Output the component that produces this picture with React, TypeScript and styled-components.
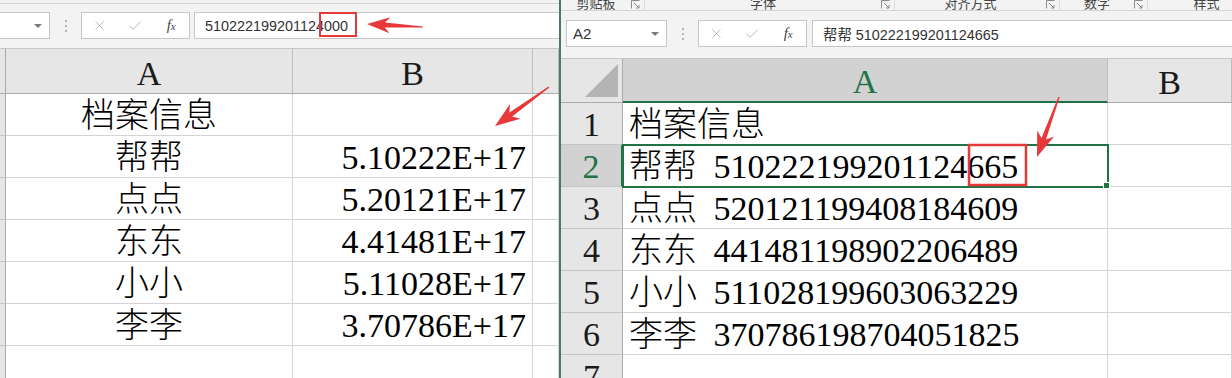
import React from 'react';
import styled, { createGlobalStyle, css } from 'styled-components';
import { X, Check } from 'lucide-react';

const GREEN = '#217346';
const RED = '#e8393a';
const CELL_FONT = `"Liberation Serif", "Noto Sans CJK SC", serif`;
const UI_FONT = `"Liberation Sans", "Noto Sans CJK SC", sans-serif`;

const GlobalStyle = createGlobalStyle`
  html, body { margin: 0; padding: 0; background: #fff; }
  body { width: 1232px; height: 378px; overflow: hidden; font-family: ${UI_FONT}; }
  #root { width: 1232px; height: 378px; }
`;

const Page = styled.div`
  position: relative;
  display: flex;
  width: 1232px;
  height: 378px;
  overflow: hidden;
`;

const Window = styled.div<{ $width?: number; $active?: boolean }>`
  display: flex;
  flex-direction: column;
  flex: ${p => (p.$width ? `0 0 ${p.$width}px` : '1 1 0')};
  min-width: 0;
  overflow: hidden;
  background: #f3f3f3;
  ${p => p.$active && css`border-left: 2px solid #4e7a5c;`}
`;

const Ribbon = styled.div<{ $height: number }>`
  flex: none;
  display: flex;
  height: ${p => p.$height}px;
  overflow: hidden;
  border-bottom: 1px solid #d5d5d5;
  background: #f3f3f3;
`;

const RibbonGroup = styled.div<{ $width: number }>`
  flex: 0 0 ${p => p.$width}px;
  display: flex;
  align-items: flex-end;
  padding-right: 4px;
  box-sizing: border-box;
  border-right: 1px solid #dcdcdc;
`;

const GroupLabel = styled.span`
  flex: 1;
  text-align: center;
  font: 13px/14px "Noto Sans CJK SC", sans-serif;
  color: #444;
  white-space: nowrap;
`;

const LauncherIcon = styled.svg`
  flex: none;
  margin-bottom: 1px;
`;

const Launcher = () => (
  <LauncherIcon viewBox="0 0 9 9" width={9} height={9}>
    <path d="M0.5 8.5V0.5H8.5" fill="none" stroke="#8a8a8a" />
    <path d="M3 3L8 8M8 5V8H5" fill="none" stroke="#8a8a8a" />
  </LauncherIcon>
);

const FormulaBar = styled.div<{ $height: number; $padTop: number; $padLeft: number }>`
  flex: none;
  display: flex;
  align-items: flex-start;
  height: ${p => p.$height}px;
  padding: ${p => p.$padTop}px 0 0 ${p => p.$padLeft}px;
  box-sizing: border-box;
  background: #f3f3f3;
`;

const NameBox = styled.div<{ $cut?: boolean }>`
  flex: none;
  width: 101px;
  height: 27px;
  box-sizing: border-box;
  margin-left: ${p => (p.$cut ? '-51px' : '0')};
  border: 1px solid #c6c6c6;
  background: #fff;
  display: flex;
  align-items: center;
  padding-left: 6px;
  font: 15px ${UI_FONT};
  color: #333;
`;

const DropArrow = styled.span`
  margin-left: auto;
  margin-right: 7px;
  width: 0;
  height: 0;
  border-left: 4px solid transparent;
  border-right: 4px solid transparent;
  border-top: 4px solid #7a7a7a;
`;

const Grip = styled.div`
  flex: 0 0 31px;
  height: 27px;
  display: flex;
  flex-direction: column;
  align-items: center;
  justify-content: center;
  gap: 3px;
  & > i {
    display: block;
    width: 2px;
    height: 2px;
    background: #b3b3b3;
  }
`;

const FxBox = styled.div`
  flex: 0 0 109px;
  height: 27px;
  box-sizing: border-box;
  border: 1px solid #c6c6c6;
  background: #fff;
  display: grid;
  grid-template-columns: repeat(3, 1fr);
  align-items: center;
  justify-items: center;
  color: #b0b0b0;
`;

const Fx = styled.span`
  font: italic 15px "Liberation Serif", serif;
  color: #444;
  & > small {
    font-size: 11px;
  }
`;

const FormulaInput = styled.div<{ $gap: number }>`
  flex: 1 1 0;
  min-width: 0;
  height: 27px;
  box-sizing: border-box;
  margin-left: ${p => p.$gap}px;
  border: 1px solid #c6c6c6;
  border-right: none;
  background: #fff;
  display: flex;
  align-items: center;
  padding-left: 10px;
  font: 14.4px ${UI_FONT};
  color: #333;
  white-space: nowrap;
`;

const Sheet = styled.div<{ $cols: string; $head: number }>`
  flex: 1 1 0;
  min-height: 0;
  overflow: hidden;
  display: grid;
  grid-template-columns: ${p => p.$cols};
  grid-template-rows: ${p => p.$head}px;
  grid-auto-rows: 42px;
  border-top: 1px solid #c6c6c6;
  background: #fff;
  font-family: ${CELL_FONT};
  font-size: 34px;
  font-weight: 300;
  color: #000;
`;

const baseCell = css`
  display: flex;
  align-items: flex-end;
  box-sizing: border-box;
  min-width: 0;
  white-space: nowrap;
  line-height: 34px;
  padding-bottom: 2px;
`;

const HeadCell = styled.div<{ $sel?: boolean }>`
  ${baseCell};
  justify-content: center;
  background: ${p => (p.$sel ? '#d2d2d2' : '#e6e6e6')};
  color: ${p => (p.$sel ? GREEN : '#1a1a1a')};
  border-right: 1px solid #bdbdbd;
  border-bottom: ${p => (p.$sel ? `2px solid ${GREEN}` : '1px solid #ababab')};
  overflow: hidden;
`;

const Corner = styled.div<{ $tri?: boolean }>`
  position: relative;
  background: #e6e6e6;
  box-sizing: border-box;
  border-right: 1px solid #ababab;
  border-bottom: 1px solid #ababab;
  ${p =>
    p.$tri &&
    css`
      &::after {
        content: '';
        position: absolute;
        right: 4px;
        bottom: 5px;
        width: 33px;
        height: 33px;
        background: #b4b4b4;
        clip-path: polygon(100% 0, 100% 100%, 0 100%);
      }
    `}
`;

const RowHead = styled.div<{ $sel?: boolean }>`
  ${baseCell};
  justify-content: center;
  background: ${p => (p.$sel ? '#d2d2d2' : '#e6e6e6')};
  color: ${p => (p.$sel ? GREEN : '#1a1a1a')};
  border-bottom: 1px solid #c4c4c4;
  border-right: ${p => (p.$sel ? `2px solid ${GREEN}` : '1px solid #ababab')};
  overflow: hidden;
`;

type Align = 'left' | 'center' | 'right';

const Cell = styled.div<{ $align?: Align; $active?: boolean }>`
  ${baseCell};
  justify-content: ${p =>
    p.$align === 'center' ? 'center' : p.$align === 'right' ? 'flex-end' : 'flex-start'};
  padding-left: 6px;
  padding-right: 6px;
  border-right: 1px solid #d4d4d4;
  border-bottom: 1px solid #d4d4d4;
  word-spacing: 8px;
  ${p =>
    p.$active &&
    css`
      position: relative;
      z-index: 1;
      outline: 2px solid ${GREEN};
      outline-offset: -1px;
      &::after {
        content: '';
        position: absolute;
        right: -3px;
        bottom: -3px;
        width: 5px;
        height: 5px;
        background: ${GREEN};
        border: 1px solid #fff;
      }
    `}
`;

const Overlay = styled.svg`
  position: absolute;
  left: 0;
  top: 0;
  width: 1232px;
  height: 378px;
  pointer-events: none;
  z-index: 5;
`;

type Pt = [number, number];

function arrowPoints(tail: Pt, tip: Pt, L = 22, H = 8, w0 = 0.6, w1 = 2.4): string {
  const dx = tip[0] - tail[0];
  const dy = tip[1] - tail[1];
  const len = Math.hypot(dx, dy);
  const ux = dx / len;
  const uy = dy / len;
  const nx = -uy;
  const ny = ux;
  const jx = tip[0] - ux * L * 0.78;
  const jy = tip[1] - uy * L * 0.78;
  const cx = tip[0] - ux * L;
  const cy = tip[1] - uy * L;
  const pts: Pt[] = [
    [tail[0] + nx * w0, tail[1] + ny * w0],
    [jx + nx * w1, jy + ny * w1],
    [cx + nx * H, cy + ny * H],
    tip,
    [cx - nx * H, cy - ny * H],
    [jx - nx * w1, jy - ny * w1],
    [tail[0] - nx * w0, tail[1] - ny * w0],
  ];
  return pts.map(p => `${p[0].toFixed(1)},${p[1].toFixed(1)}`).join(' ');
}

const leftRows: [string, string][] = [
  ['档案信息', ''],
  ['帮帮', '5.10222E+17'],
  ['点点', '5.20121E+17'],
  ['东东', '4.41481E+17'],
  ['小小', '5.11028E+17'],
  ['李李', '3.70786E+17'],
  ['', ''],
];

const rightRows: string[] = [
  '档案信息',
  '帮帮 510222199201124665',
  '点点 520121199408184609',
  '东东 441481198902206489',
  '小小 511028199603063229',
  '李李 370786198704051825',
  '',
];

const ribbonGroups: { label: string; width: number; launcher: boolean }[] = [
  { label: '剪贴板', width: 84, launcher: true },
  { label: '字体', width: 250, launcher: true },
  { label: '对齐方式', width: 165, launcher: true },
  { label: '数字', width: 88, launcher: true },
  { label: '样式', width: 122, launcher: false },
];

const FxIcons = () => (
  <FxBox>
    <X size={15} strokeWidth={1.4} />
    <Check size={16} strokeWidth={1.4} />
    <Fx>
      f<small>x</small>
    </Fx>
  </FxBox>
);

export default function App() {
  return (
    <>
      <GlobalStyle />
      <Page>
        <Window $width={559}>
          <Ribbon $height={3} />
          <FormulaBar $height={44} $padTop={8} $padLeft={0}>
            <NameBox $cut>
              <DropArrow />
            </NameBox>
            <Grip>
              <i />
              <i />
              <i />
            </Grip>
            <FxIcons />
            <FormulaInput $gap={4}>510222199201124000</FormulaInput>
          </FormulaBar>
          <Sheet $cols="6px 287px 240px 1fr" $head={45}>
            <Corner />
            <HeadCell>A</HeadCell>
            <HeadCell>B</HeadCell>
            <HeadCell />
            {leftRows.map(([name, num], i) => (
              <React.Fragment key={i}>
                <RowHead />
                <Cell $align="center">{name}</Cell>
                <Cell $align="right">{num}</Cell>
                <Cell />
              </React.Fragment>
            ))}
          </Sheet>
        </Window>

        <Window $active>
          <Ribbon $height={10}>
            {ribbonGroups.map(g => (
              <RibbonGroup key={g.label} $width={g.width}>
                <GroupLabel>{g.label}</GroupLabel>
                {g.launcher && <Launcher />}
              </RibbonGroup>
            ))}
          </Ribbon>
          <FormulaBar $height={47} $padTop={9} $padLeft={5}>
            <NameBox>
              A2
              <DropArrow />
            </NameBox>
            <Grip>
              <i />
              <i />
              <i />
            </Grip>
            <FxIcons />
            <FormulaInput $gap={5}>帮帮 510222199201124665</FormulaInput>
          </FormulaBar>
          <Sheet $cols="62px 485px 1fr" $head={44}>
            <Corner $tri />
            <HeadCell $sel>A</HeadCell>
            <HeadCell>B</HeadCell>
            {rightRows.map((text, i) => (
              <React.Fragment key={i}>
                <RowHead $sel={i === 1}>{i + 1}</RowHead>
                <Cell $align="left" $active={i === 1}>
                  {text}
                </Cell>
                <Cell />
              </React.Fragment>
            ))}
          </Sheet>
        </Window>

        <Overlay viewBox="0 0 1232 378">
          <rect x={320} y={13} width={36} height={23} fill="none" stroke={RED} strokeWidth={2} />
          <rect x={969} y={145} width={57} height={40} fill="none" stroke={RED} strokeWidth={2.5} />
          <polygon points={arrowPoints([423, 27], [367, 24], 23, 8)} fill={RED} />
          <polygon points={arrowPoints([549, 87], [495, 126], 25, 9)} fill={RED} />
          <polygon points={arrowPoints([1059, 97], [1037, 157], 25, 9)} fill={RED} />
        </Overlay>
      </Page>
    </>
  );
}
